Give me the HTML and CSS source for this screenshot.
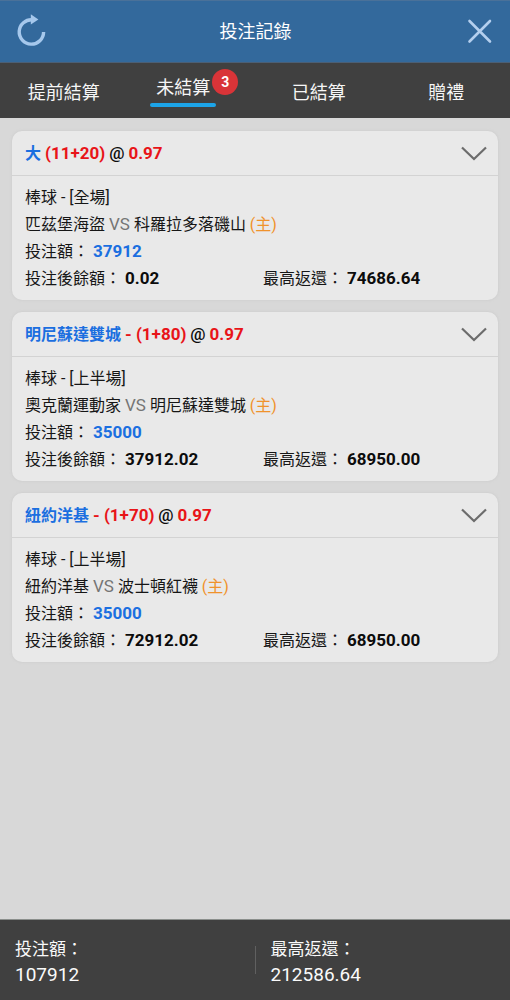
FILE: index.html
```html
<!DOCTYPE html>
<html lang="zh-Hant">
<head>
<meta charset="utf-8">
<meta name="viewport" content="width=device-width, initial-scale=1">
<title>投注記錄</title>
<link rel="stylesheet" href="styles.css">
</head>
<body>
<div class="app">
  <header class="topbar">
    <button class="icon-button" type="button" aria-label="重新整理">
      <svg width="32" height="36" viewBox="0 0 32 36" aria-hidden="true">
        <path d="M17.5 6.8A12.2 12.2 0 1 0 28.6 19" fill="none" stroke="#a6c8ec" stroke-width="3.4"/>
        <path d="M15.8 1.2L23.4 6.6L15.8 11.6Z" fill="#a6c8ec"/>
      </svg>
    </button>
    <h1 class="title">投注記錄</h1>
    <button class="icon-button" type="button" aria-label="關閉">
      <svg width="32" height="36" viewBox="0 0 32 36" aria-hidden="true">
        <path d="M5.5 8L26 28.5M26 8L5.5 28.5" fill="none" stroke="#b4cfee" stroke-width="2.6" stroke-linecap="round"/>
      </svg>
    </button>
  </header>

  <nav class="tabs">
    <button class="tab" type="button">提前結算</button>
    <button class="tab tab-active" type="button"><span class="tab-label">未結算<span class="badge">3</span></span></button>
    <button class="tab" type="button">已結算</button>
    <button class="tab" type="button">贈禮</button>
  </nav>

  <main class="bets">
    <article class="card">
      <div class="card-head">
        <h2 class="pick"><span class="team">大</span> <span class="odds">(11+20)</span> <span class="num">@</span> <span class="odds">0.97</span></h2>
        <button class="toggle" type="button" aria-label="收合">
          <svg width="26" height="16" viewBox="0 0 26 16" aria-hidden="true"><path d="M2 2.5L14 14L26 2.5" fill="none" stroke="#6c6c6c" stroke-width="2.2"/></svg>
        </button>
      </div>
      <div class="card-body">
        <p>棒球 - [全場]</p>
        <p>匹茲堡海盜 <span class="versus">VS</span> 科羅拉多落磯山 <span class="home">(主)</span></p>
        <p>投注額： <strong class="num stake">37912</strong></p>
        <div class="totals">
          <p>投注後餘額： <strong class="num">0.02</strong></p>
          <p>最高返還： <strong class="num">74686.64</strong></p>
        </div>
      </div>
    </article>

    <article class="card">
      <div class="card-head">
        <h2 class="pick"><span class="team">明尼蘇達雙城</span> <span class="odds">- (1+80)</span> <span class="num">@</span> <span class="odds">0.97</span></h2>
        <button class="toggle" type="button" aria-label="收合">
          <svg width="26" height="16" viewBox="0 0 26 16" aria-hidden="true"><path d="M2 2.5L14 14L26 2.5" fill="none" stroke="#6c6c6c" stroke-width="2.2"/></svg>
        </button>
      </div>
      <div class="card-body">
        <p>棒球 - [上半場]</p>
        <p>奧克蘭運動家 <span class="versus">VS</span> 明尼蘇達雙城 <span class="home">(主)</span></p>
        <p>投注額： <strong class="num stake">35000</strong></p>
        <div class="totals">
          <p>投注後餘額： <strong class="num">37912.02</strong></p>
          <p>最高返還： <strong class="num">68950.00</strong></p>
        </div>
      </div>
    </article>

    <article class="card">
      <div class="card-head">
        <h2 class="pick"><span class="team">紐約洋基</span> <span class="odds">- (1+70)</span> <span class="num">@</span> <span class="odds">0.97</span></h2>
        <button class="toggle" type="button" aria-label="收合">
          <svg width="26" height="16" viewBox="0 0 26 16" aria-hidden="true"><path d="M2 2.5L14 14L26 2.5" fill="none" stroke="#6c6c6c" stroke-width="2.2"/></svg>
        </button>
      </div>
      <div class="card-body">
        <p>棒球 - [上半場]</p>
        <p>紐約洋基 <span class="versus">VS</span> 波士頓紅襪 <span class="home">(主)</span></p>
        <p>投注額： <strong class="num stake">35000</strong></p>
        <div class="totals">
          <p>投注後餘額： <strong class="num">72912.02</strong></p>
          <p>最高返還： <strong class="num">68950.00</strong></p>
        </div>
      </div>
    </article>
  </main>

  <footer class="summary">
    <dl class="summary-item"><dt>投注額：</dt><dd>107912</dd></dl>
    <span class="divider"></span>
    <dl class="summary-item"><dt>最高返還：</dt><dd>212586.64</dd></dl>
  </footer>
</div>
</body>
</html>
```
FILE: styles.css
```css
* { box-sizing: border-box; }

body, h1, h2, p, dl, dd { margin: 0; }

body {
  font-family: Roboto, "Noto Sans CJK TC", sans-serif;
  font-size: 16px;
  color: #161616;
  background: #d8d8d8;
}

button {
  padding: 0;
  border: 0;
  background: none;
  color: inherit;
  font: inherit;
  cursor: pointer;
}

svg { display: block; overflow: visible; }

.app {
  display: flex;
  flex-direction: column;
  min-height: 100vh;
}

.topbar {
  display: flex;
  align-items: center;
  justify-content: space-between;
  height: 63px;
  padding: 0 14px 2px 15px;
  background: #33699c;
  border-top: 1px solid #4a7199;
  border-bottom: 1px solid #4b5f75;
  color: #fff;
}

.title {
  padding-bottom: 2px;
  font-size: 18px;
  font-weight: 400;
}

.tabs {
  display: grid;
  grid-template-columns: repeat(4, 1fr);
  height: 55px;
  background: #404040;
  color: #f6f6f6;
  font-size: 18px;
}

.tab-active { padding: 0 16px 0 0; }

.tab-label {
  position: relative;
  display: inline-block;
  padding: 0 6px 1px;
  line-height: 28px;
}

.tab-label::after {
  content: "";
  display: block;
  height: 4px;
  margin: 1px -6px 0;
  border-radius: 2px;
  background: #1ca4e8;
}

.badge {
  position: absolute;
  top: -5px;
  right: -22px;
  width: 26px;
  height: 26px;
  border-radius: 50%;
  background: #d93438;
  color: #fff;
  font-size: 14px;
  font-weight: 700;
  line-height: 26px;
  text-align: center;
}

.bets {
  display: flex;
  flex: 1;
  flex-direction: column;
  gap: 12px;
  padding: 13px 12px;
}

.card {
  border-radius: 10px;
  background: #e9e9e9;
  box-shadow: 0 0 3px #c8c8c8;
}

.card-head {
  display: flex;
  align-items: center;
  justify-content: space-between;
  height: 45px;
  padding: 0 12px 0 13px;
  border-bottom: 1px solid #d3d3d3;
}

.pick {
  padding-bottom: 3px;
  font-size: 16px;
  font-weight: 700;
}

.team { color: #1b6fe0; }

.odds {
  color: #e81418;
  font-size: 17px;
}

.num {
  color: #0c0c0c;
  font-size: 17px;
}

.pick .num { font-weight: 500; }

.card-body {
  padding: 8px 13px;
  line-height: 27px;
}

.versus {
  color: #757575;
  font-size: 17px;
}

.home { color: #f0922b; }

.card-body .stake { color: #1b6fe0; }

.totals {
  display: grid;
  grid-template-columns: 1fr 1fr;
  column-gap: 16px;
}

.summary {
  display: grid;
  grid-template-columns: 1fr auto 1fr;
  align-items: center;
  height: 81px;
  border-top: 1px solid #8b8f8c;
  background: #404040;
  color: #fafafa;
}

.summary-item {
  padding: 4px 15px 0;
  font-size: 17px;
  line-height: 25px;
}

.summary-item dd { font-size: 19px; }

.divider {
  width: 1px;
  height: 28px;
  background: #606060;
}
```
